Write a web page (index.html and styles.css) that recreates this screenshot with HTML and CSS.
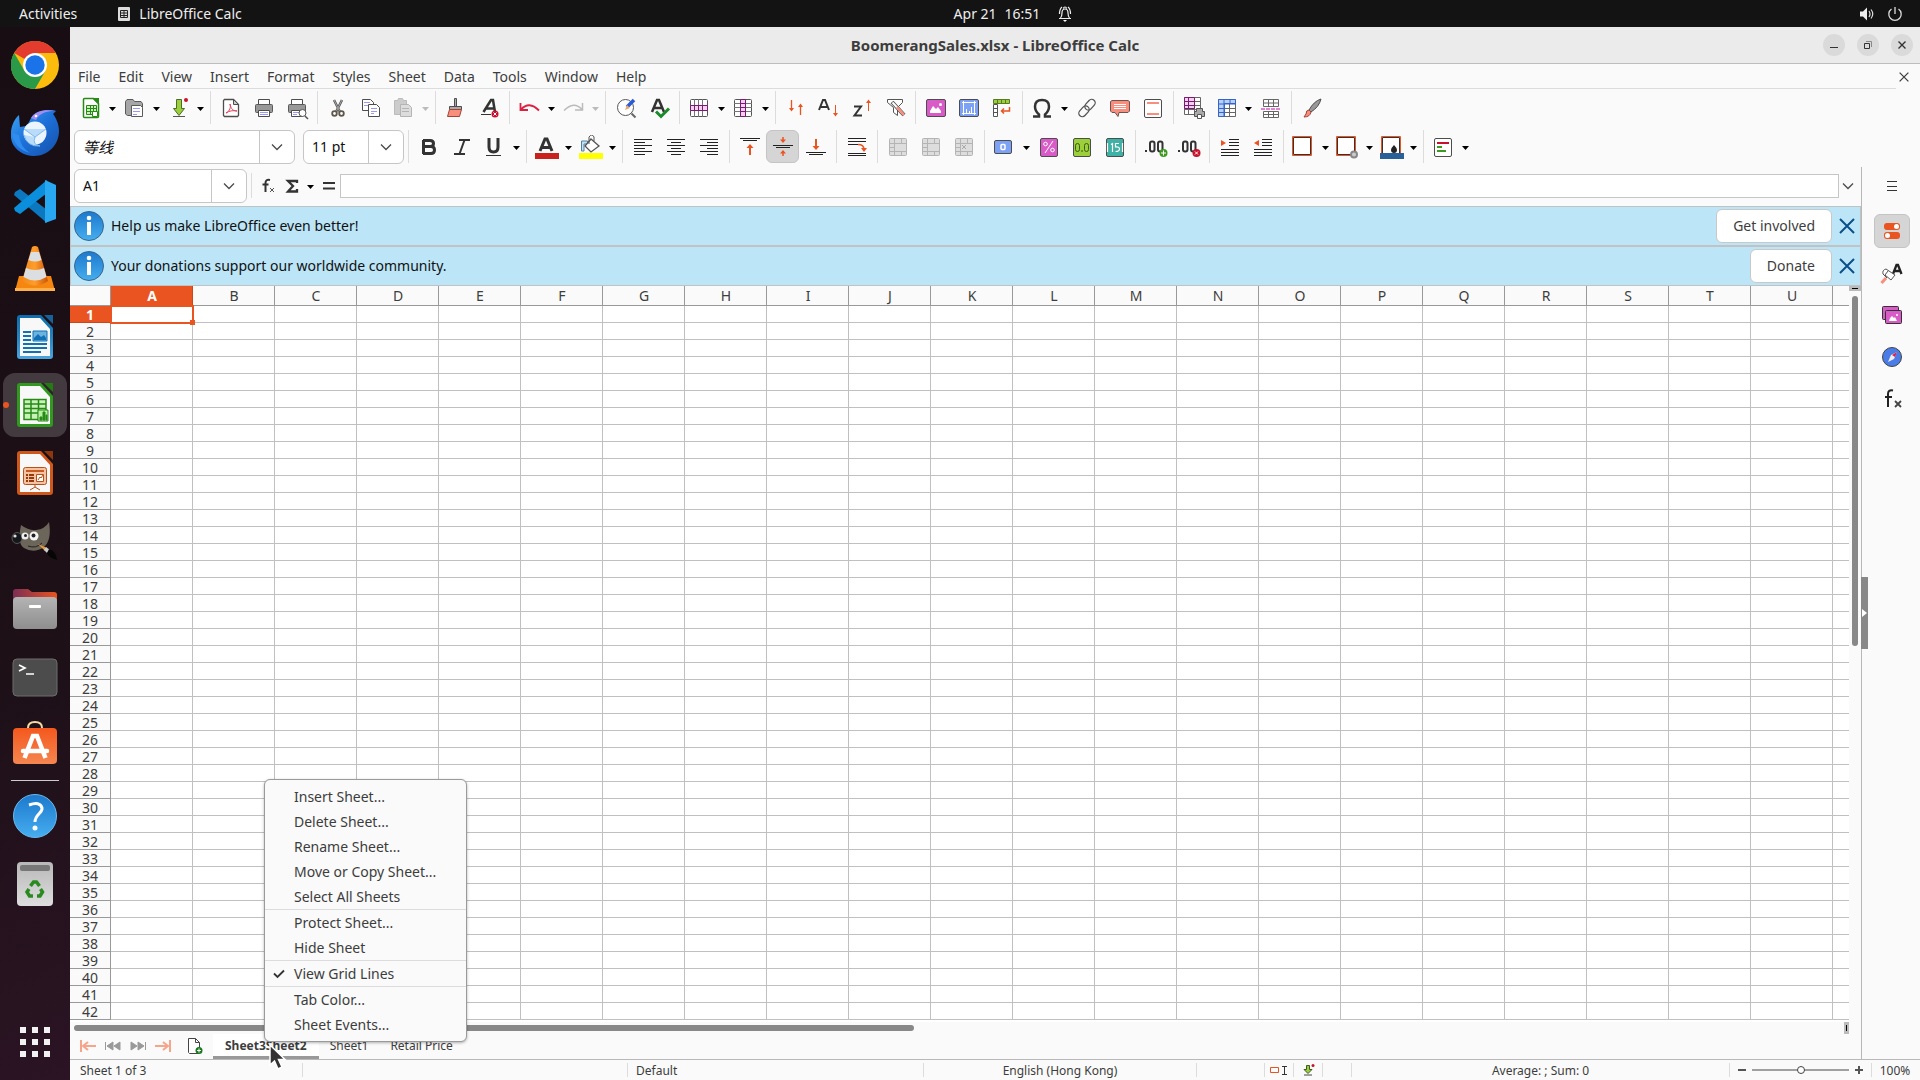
FILE: index.html
```
<!DOCTYPE html>
<html lang="en">
<head>
  <meta charset="UTF-8">
  <meta name="viewport" content="width=device-width, initial-scale=1">
  <title>BoomerangSales.xlsx - LibreOffice Calc</title>
  <link rel="stylesheet" href="styles.css">
</head>
<body>
  <svg class="defs" width="0" height="0" aria-hidden="true">
    <linearGradient id="blueDoc" x2="0" y2="1"><stop offset="0" stop-color="#0d6cab"/><stop offset=".5" stop-color="#2583c0"/><stop offset="1" stop-color="#4aa6de"/></linearGradient>
    <linearGradient id="bag" x2="0" y2="1"><stop offset="0" stop-color="#f4581d"/><stop offset="1" stop-color="#f58650"/></linearGradient>
    <linearGradient id="info" x2="0" y2="1"><stop offset="0" stop-color="#1c78cc"/><stop offset="1" stop-color="#46aef0"/></linearGradient>
    <linearGradient id="grey" x2="0" y2="1"><stop offset="0" stop-color="#b4b4b4"/><stop offset="1" stop-color="#8e8e8e"/></linearGradient>
    <linearGradient id="trash" x2="0" y2="1"><stop offset="0" stop-color="#b8b8b8"/><stop offset="1" stop-color="#dedede"/></linearGradient>
    <linearGradient id="folder"><stop offset="0" stop-color="#7c2d55"/><stop offset="1" stop-color="#e95420"/></linearGradient>
    <linearGradient id="bird" x2="1" y2="1"><stop offset="0" stop-color="#3aa5f5"/><stop offset=".5" stop-color="#1c6fd8"/><stop offset="1" stop-color="#1550a8"/></linearGradient>
    <linearGradient id="cone"><stop offset="0" stop-color="#f08a1c"/><stop offset=".5" stop-color="#ff9c2a"/><stop offset="1" stop-color="#c9550a"/></linearGradient>
    <symbol id="dd" viewBox="0 0 11 24"><path d="M2 11h7l-3.500 4z" fill="currentColor"/></symbol>
    <symbol id="chev" viewBox="0 0 12 12"><path d="M1 3.500l5 5 5-5" fill="none" stroke="#4a4a4a" stroke-width="1.300"/></symbol>
    <symbol id="cross" viewBox="0 0 16 16"><path d="M1 1l14 14M15 1L1 15" fill="none" stroke="currentColor" stroke-width="2"/></symbol>
    <symbol id="merge" viewBox="0 0 24 24"><rect x="3.500" y="3.500" width="17" height="17" rx="1" fill="#ddd" stroke="#b4b4b4"/><path d="M3 8.500h18M3 16.500h18M8.500 3v18M15.500 3v5M15.500 16v5M3 12.500h5" stroke="#b4b4b4" fill="none"/></symbol>
  </svg>

  <header class="topbar">
    <div class="topbar-left">
      <button type="button">Activities</button>
      <button type="button" class="app-name">
        <svg width="14" height="16" viewBox="0 0 14 16"><path d="M1 2q0-1 1-1h10q1 0 1 1v12q0 1-1 1H2q-1 0-1-1z" fill="#ddd"/><path d="M3.500 4.500h7v7h-7zM3 7h8M3 9.500h8M7 4v8" stroke="#222" fill="none"/></svg>
        LibreOffice Calc
      </button>
    </div>
    <button type="button" class="clock">
      <span>Apr 21</span> <span>16:51</span>
      <svg width="14" height="18" viewBox="0 0 14 18"><path d="M1 13.500h12M2.500 13q1.500-2 1.500-5 0-4 3-4t3 4q0 3 1.500 5M5.500 3.500Q5.500 2 7 2t1.500 1.500M1.500 9q0-5 2.500-7M12.500 9q0-5-2.500-7" fill="none" stroke="#eee" stroke-width="1.200"/><path d="M5 15h4l-2 2z" fill="#fff"/></svg>
    </button>
    <div class="topbar-right">
      <svg width="16" height="16" viewBox="0 0 16 16"><path d="M1 5.500h3L8 1.500v13L4 10.500H1z" fill="#eee"/><path d="M10 5q2 3 0 6M12 3.500q3.500 4.500 0 9" fill="none" stroke="#ddd" stroke-width="1.200"/></svg>
      <svg width="16" height="16" viewBox="0 0 16 16"><path d="M4.500 3A6.200 6.200 0 1 0 11.500 3M8 1v7" fill="none" stroke="#ddd" stroke-width="1.300"/></svg>
    </div>
  </header>

  <div class="desktop">
    <nav class="dock">
      <button type="button" aria-label="Chrome">
        <svg viewBox="0 0 48 48"><circle cx="24" cy="24" r="24" fill="#fbbc0e"/><path d="M24 24L3.200 12A24 24 0 0 1 44.800 12H24z" fill="#e33b2e"/><path d="M3.200 12A24 24 0 0 0 24 48l10.400-18L24 24 13.600 30z" fill="#2a9a48"/><circle cx="24" cy="24" r="12" fill="#fff"/><circle cx="24" cy="24" r="9.700" fill="#1a73e8"/></svg>
      </button>
      <button type="button" aria-label="Thunderbird">
        <svg viewBox="0 0 48 48"><path d="M8 6c-7 6-10 18-7 27 3 8 12 14 22 14 14 0 25-11 25-25 0-7-3-13-6-17l3-3c-9-2-20-1-25 7-2 4-3 6-5 8L9 18z" fill="url(#bird)"/><path d="M20 9C24 2 34 0 45 2c-8 0-16 1-20 9z" fill="#a58cf5"/><circle cx="24" cy="24" r="11.500" fill="#eaf5ff"/><path d="M13 20l11 8 11-8M24 28q-3 8 5 9-13 1-16-11" fill="#b9dcfb" stroke="#7fb8ee"/><path d="M1 24q2 16 18 20Q9 38 8 26z" fill="#2f8df0"/><circle cx="25" cy="7" r="1.300" fill="#fff"/></svg>
      </button>
      <button type="button" aria-label="Visual Studio Code">
        <svg viewBox="0 0 48 48"><path d="M4 15l5-3 27 21v13L3 18z" fill="#0b78c0"/><path d="M4 34l5 3 27-21V3L3 31z" fill="#0b8fdc"/><path d="M34 3l11 5v34l-11 4z" fill="#29a8f2"/></svg>
      </button>
      <button type="button" aria-label="VLC">
        <svg viewBox="0 0 48 48"><path d="M8 31h32l4 15H4z" fill="#f5860f"/><path d="M4 43h40v3H4z" fill="#ffb04a"/><path d="M21 2q3-2 6 0l10 34q-13 9-26 0z" fill="url(#cone)"/><path d="M20 7h8l2.500 8q-6.500 3-13 0zM15 23q9 4 18 0l2.500 9q-11.500 7-23 0z" fill="#dcdfe2"/></svg>
      </button>
      <button type="button" aria-label="LibreOffice Writer">
        <svg viewBox="0 0 48 48"><path d="M9 2h23l10 11v30q0 3-3 3H9q-3 0-3-3V5q0-3 3-3z" fill="url(#blueDoc)"/><path d="M9 5h20l10 11v27H9z" fill="#f8f8f8"/><path d="M30 2l12 13V11l-9-9z" fill="#1a1016"/><path d="M33 2h9v9z" fill="#17629a"/><path d="M12 19h8M12 23h8M12 27h8M12 31h24M12 35h24M12 39h18" stroke="#1171b5" stroke-width="2"/><path d="M22 18h14v10H22z" fill="#6bb4e0" stroke="#1171b5"/><path d="M23 27v-2l4-4 3 3 3-2 2 3v2z" fill="#1171b5"/></svg>
      </button>
      <button type="button" class="active" aria-label="LibreOffice Calc">
        <svg viewBox="0 0 48 48"><path d="M9 2h23l10 11v30q0 3-3 3H9q-3 0-3-3V5q0-3 3-3z" fill="#2f9a1d"/><path d="M9 5h20l10 11v27H9z" fill="#f8f8f8"/><path d="M30 2l12 13V11l-9-9z" fill="#2c2429"/><path d="M33 2h9v9z" fill="#237c12"/><path d="M13 18.500h22v20H13zM13 23h22M13 27.500h22M13 32h22M20 18v20M27.500 18v20" fill="#c9f2b8" stroke="#268a15" stroke-width="1.500"/><path d="M27 29h10v11H27z" fill="#b8eea4" stroke="#268a15"/><path d="M29 39v-3h2v3zM32 39v-8h2v8zM35 39v-5h1v5z" fill="#268a15" stroke="#268a15"/></svg>
      </button>
      <button type="button" aria-label="LibreOffice Impress">
        <svg viewBox="0 0 48 48"><path d="M9 2h23l10 11v30q0 3-3 3H9q-3 0-3-3V5q0-3 3-3z" fill="#cf5719"/><path d="M9 5h20l10 11v27H9z" fill="#f8f8f8"/><path d="M30 2l12 13V11l-9-9z" fill="#1a1016"/><path d="M33 2h9v9z" fill="#8e360c"/><rect x="12.500" y="18.500" width="23" height="17" rx="2" fill="#f3c3a4" stroke="#b8501a"/><path d="M15 22h18" stroke="#c9591f" stroke-width="2"/><path d="M15 26h2M18 26h5M15 29h2M18 29h5M15 32h2M18 32h5" stroke="#963a0b" stroke-width="2"/><path d="M25.500 25.500h7v7h-7zM27 31l2-3 1 1 2-3M24 36v2l-5 3M24 38l5 3" fill="#fff" stroke="#b8501a"/></svg>
      </button>
      <button type="button" aria-label="GIMP">
        <svg viewBox="0 0 48 48"><path d="M10 8q8 6 15 5 9-1 13-8 3 18-5 25-10 7-20 1Q6 27 10 8z" fill="#6b655a"/><ellipse cx="6" cy="21" rx="5" ry="5.500" fill="#15181a" stroke="#555"/><circle cx="4" cy="19" r="1.600" fill="#ddd"/><circle cx="14" cy="19" r="3.500" fill="#eee"/><circle cx="23" cy="19" r="4.500" fill="#f4f4f4"/><circle cx="14.500" cy="18.500" r="1.500" fill="#222"/><circle cx="22.500" cy="18.500" r="2" fill="#222"/><path d="M17 29q8 3 14-3" stroke="#222" fill="none"/><path d="M27 27l9 4-2 3z" fill="#e69a3c"/><path d="M35 30l4 3-3 3-3-3z" fill="#ccc"/><path d="M38 32q7 2 8 11-8-2-10-7z" fill="#060606"/></svg>
      </button>
      <button type="button" aria-label="Files">
        <svg viewBox="0 0 48 48"><path d="M2 7q0-3 3-3h12l4 3h22q3 0 3 3v15H2z" fill="url(#folder)"/><rect x="2" y="12" width="44" height="32" rx="4" fill="url(#grey)"/><rect x="18" y="20" width="12" height="3" rx="1" fill="#fff"/></svg>
      </button>
      <button type="button" aria-label="Terminal">
        <svg viewBox="0 0 48 48"><rect x="2" y="6" width="44" height="37" rx="4" fill="#4c4c4c" stroke="#6c6c6c"/><path d="M8 12l6 3-6 3M15 21h8" fill="none" stroke="#fff" stroke-width="1.700"/></svg>
      </button>
      <button type="button" aria-label="Ubuntu Software">
        <svg viewBox="0 0 48 48"><path d="M17 10V7q0-6 7-6t7 6v3" fill="none" stroke="#f5d9a5" stroke-width="2"/><rect x="2" y="7" width="44" height="36" rx="4" fill="url(#bag)"/><path d="M13.500 37l8.500-22h4l8.500 22" stroke="#fff" stroke-width="4.500" fill="none"/><path d="M12 30h24" stroke="#fff" stroke-width="4.500" stroke-linecap="round"/></svg>
      </button>
      <hr>
      <button type="button" aria-label="Help">
        <svg viewBox="0 0 48 48"><circle cx="24" cy="24" r="21.500" fill="url(#info)" stroke="#6cb9ee"/><path d="M18 13q11-4 13 3c1 5-7 6-7 14" fill="none" stroke="#fff" stroke-width="3"/><circle cx="24" cy="36" r="2.500" fill="#fff"/></svg>
      </button>
      <button type="button" aria-label="Trash">
        <svg viewBox="0 0 48 48"><rect x="6" y="2" width="36" height="44" rx="4" fill="url(#trash)"/><rect x="9" y="5" width="30" height="6" rx="2" fill="#777"/><path d="M19.500 26l3-4h3l3 4M29.500 29l2 3-2.500 4H26M22 36h-3.500L16 32l2-3" fill="none" stroke="#2a8a20" stroke-width="3.500"/></svg>
      </button>
      <button type="button" class="apps" aria-label="Show Applications">
        <svg viewBox="0 0 48 48"><path d="M9 9h6v6H9zM21 9h6v6h-6zM33 9h6v6h-6zM9 21h6v6H9zM21 21h6v6h-6zM33 21h6v6h-6zM9 33h6v6H9zM21 33h6v6h-6zM33 33h6v6h-6z" fill="#f2f2f2"/></svg>
      </button>
    </nav>

    <main class="window">
      <div class="titlebar">
        <h1>BoomerangSales.xlsx - LibreOffice Calc</h1>
        <div class="win-buttons">
          <button type="button" aria-label="Minimize"><svg width="10" height="10" viewBox="0 0 10 10"><path d="M1 7.500h8" stroke="#333"/></svg></button>
          <button type="button" aria-label="Restore"><svg width="10" height="10" viewBox="0 0 10 10"><path d="M1.500 3.500h5v5h-5z" fill="none" stroke="#333"/><path d="M3 1.500h5.500V7" fill="none" stroke="#888"/></svg></button>
          <button type="button" aria-label="Close"><svg width="10" height="10" viewBox="0 0 10 10"><path d="M1.500 1.500l7 7M8.500 1.500l-7 7" stroke="#333" stroke-width="1.400"/></svg></button>
        </div>
      </div>

      <div class="menubar">
        <nav>
          <button type="button">File</button><button type="button">Edit</button><button type="button">View</button><button type="button">Insert</button><button type="button">Format</button><button type="button">Styles</button><button type="button">Sheet</button><button type="button">Data</button><button type="button">Tools</button><button type="button">Window</button><button type="button">Help</button>
        </nav>
        <button type="button" class="close-doc" aria-label="Close document"><svg width="10" height="10"><use href="#cross"/></svg></button>
      </div>

      <div class="toolbar">
        <button type="button" class="tb" aria-label="New"><svg viewBox="0 0 24 24"><path d="M5.500 2.500h9l5 5v13q0 1-1 1h-13q-1 0-1-1v-17q0-1 1-1z" fill="#fff" stroke="#268a15" stroke-width="1.500"/><path d="M13 2h7v7z" fill="#268a15"/><path d="M7.500 9.500h10v9h-10zM7 12.500h11M7 15.500h11M11.500 9v10M14.500 9v10" fill="#c9f2b8" stroke="#268a15"/><path d="M13.500 15.500h5v5h-5z" fill="#fff" stroke="#268a15"/></svg></button>
        <button type="button" class="dd" aria-label="New options"><svg><use href="#dd"/></svg></button>
        <button type="button" class="tb" aria-label="Open"><svg viewBox="0 0 24 24"><path d="M2.500 18V5.500l1.500-2h6l1.500 2H18l1.500 2v12h-15z" fill="#a6a6a6" stroke="#5a5a5a"/><path d="M8.500 9.500h9l2 2v9h-11z" fill="#fff" stroke="#5a5a5a"/><path d="M10 12.500h7M10 15.500h7M10 18.500h4" stroke="#9a9af0"/></svg></button>
        <button type="button" class="dd" aria-label="Open options"><svg><use href="#dd"/></svg></button>
        <button type="button" class="tb" aria-label="Save"><svg viewBox="0 0 24 24"><path d="M9.500 3.500h5v9h3l-5.500 7-5.500-7h3z" fill="#9bcf3c" stroke="#4d6b2a"/><path d="M6 20.500h12" stroke="#555"/><circle cx="19" cy="4" r="2" fill="#c9112d"/></svg></button>
        <button type="button" class="dd" aria-label="Save options"><svg><use href="#dd"/></svg></button>
        <i class="sep"></i>
        <button type="button" class="tb" aria-label="Export as PDF"><svg viewBox="0 0 24 24"><path d="M5.500 3.500h9l5 5v11l-1 1h-13l-1-1v-15z" fill="#fff" stroke="#4d4d4d" stroke-width="1.300"/><path d="M14.500 3.500v5h5z" fill="#ccc" stroke="#4d4d4d"/><path d="M7 17c4-2 5-6 4-9 1 5 3 7 7 7-4-1-8 0-11 2z" fill="none" stroke="#e0405a"/></svg></button>
        <button type="button" class="tb" aria-label="Print"><svg viewBox="0 0 24 24"><path d="M6.500 9V3.500h11V9" fill="#fff" stroke="#4d4d4d"/><rect x="3.500" y="8.500" width="17" height="8" rx="1" fill="#999" stroke="#5a5a5a"/><path d="M6.500 14.500h11v6h-11z" fill="#fff" stroke="#4d4d4d"/><path d="M8 16.500h8M8 18.500h8" stroke="#9a9af0"/></svg></button>
        <button type="button" class="tb" aria-label="Print preview"><svg viewBox="0 0 24 24"><path d="M6.500 9V3.500h11V9" fill="#fff" stroke="#4d4d4d"/><rect x="3.500" y="8.500" width="17" height="8" rx="1" fill="#999" stroke="#5a5a5a"/><path d="M6.500 14.500h11v6h-11z" fill="#fff" stroke="#4d4d4d"/><path d="M8 16.500h8M8 18.500h4" stroke="#9a9af0"/><circle cx="17.500" cy="17" r="3.500" fill="#fff" stroke="#555"/><path d="M20 20l3 3" stroke="#555" stroke-width="1.500"/></svg></button>
        <i class="sep"></i>
        <button type="button" class="tb" aria-label="Cut"><svg viewBox="0 0 24 24"><path d="M8 4l6 12M16 4l-6 12" stroke="#555" stroke-width="2.500"/><path d="M8 4l6 12M16 4l-6 12" stroke="#aaa"/><circle cx="8.500" cy="17.500" r="2.300" fill="none" stroke="#5e584b" stroke-width="1.800"/><circle cx="15.500" cy="17.500" r="2.300" fill="none" stroke="#5e584b" stroke-width="1.800"/></svg></button>
        <button type="button" class="tb" aria-label="Copy"><svg viewBox="0 0 24 24"><path d="M3.500 3.500h8l3 3v8h-11z" fill="#fff" stroke="#4d4d4d"/><path d="M5 6.500h6M5 9.500h6" stroke="#9a9af0"/><path d="M9.500 8.500h8l3 3v9h-11z" fill="#fff" stroke="#4d4d4d"/><path d="M12 12.500h6M12 15.500h6M12 17.500h3" stroke="#9a9af0"/></svg></button>
        <button type="button" class="tb" aria-label="Paste"><svg viewBox="0 0 24 24"><path d="M2.500 4.500h3l1-2h4l1 2h3v14h-12z" fill="#ccc" stroke="#bbb"/><path d="M8.500 8.500h8l3 3v9h-11z" fill="#ddd" stroke="#b4b4b4"/><path d="M10 12.500h7M10 15.500h7" stroke="#b4b4b4"/></svg></button>
        <button type="button" class="dd off" aria-label="Paste options"><svg><use href="#dd"/></svg></button>
        <i class="sep"></i>
        <button type="button" class="tb" aria-label="Clone formatting"><svg viewBox="0 0 24 24"><path d="M10.500 2.500h2v8h-2z" fill="#aaa" stroke="#4d4d4d"/><path d="M5.500 10.500h12v3h-12z" fill="#aaa" stroke="#4d4d4d"/><path d="M5.500 13.500h12l-2 7h-12z" fill="#f98e7d" stroke="#a04538"/></svg></button>
        <button type="button" class="tb" aria-label="Clear formatting"><svg viewBox="0 0 24 24"><path d="M6.500 16L14 4h2l2 12M9 12.500h8" fill="none" stroke="#333" stroke-width="2.500"/><path d="M4 18.500h10" stroke="#333"/><circle cx="18" cy="18" r="3.500" fill="#c9112d"/><path d="M16.500 16.500l3 3M19.500 16.500l-3 3" stroke="#fff"/></svg></button>
        <i class="sep"></i>
        <button type="button" class="tb" aria-label="Undo"><svg viewBox="0 0 24 24"><path d="M2.500 7v7H10M3 13.500q8-9 18 1" fill="none" stroke="#dd2040" stroke-width="1.800"/></svg></button>
        <button type="button" class="dd" aria-label="Undo options"><svg><use href="#dd"/></svg></button>
        <button type="button" class="tb" aria-label="Redo"><svg viewBox="0 0 24 24"><path d="M20.500 7v7H13M20 13.500q-8-9-18 1" fill="none" stroke="#bbb" stroke-width="1.500"/></svg></button>
        <button type="button" class="dd off" aria-label="Redo options"><svg><use href="#dd"/></svg></button>
        <i class="sep"></i>
        <button type="button" class="tb" aria-label="Find and replace"><svg viewBox="0 0 24 24"><circle cx="11.500" cy="11.500" r="8" fill="#fff" stroke="#555"/><path d="M17.500 17.500l4 4" stroke="#666" stroke-width="2"/><path d="M20 4l-7 7" stroke="#2a5bd8" stroke-width="3.500"/><path d="M13 9l3 3-5 2z" fill="#f0a868"/></svg></button>
        <button type="button" class="tb" aria-label="Spelling"><svg viewBox="0 0 24 24"><path d="M5 16L10 4h2l5 12M7.500 12h7" fill="none" stroke="#333" stroke-width="2.500"/><path d="M9 15.500l5 5 8-8" fill="none" stroke="#1a8a2a" stroke-width="3"/></svg></button>
        <i class="sep"></i>
        <button type="button" class="tb" aria-label="Row"><svg viewBox="0 0 24 24"><rect x="2.500" y="3.500" width="17" height="17" rx="1" fill="#fff" stroke="#555"/><path d="M6.500 3v18M10.500 3v18M14.500 3v18" stroke="#777"/><path d="M2.500 9.500h17v5h-17zM6.500 9v6M10.500 9v6M14.500 9v6" fill="#f3d0f0" stroke="#7a1a72"/></svg></button>
        <button type="button" class="dd" aria-label="Row options"><svg><use href="#dd"/></svg></button>
        <button type="button" class="tb" aria-label="Column"><svg viewBox="0 0 24 24"><rect x="2.500" y="3.500" width="17" height="17" rx="1" fill="#fff" stroke="#555"/><path d="M2 7.500h18M2 11.500h18M2 15.500h18" stroke="#777"/><path d="M8.500 3.500h5v17h-5zM8 7.500h6M8 11.500h6M8 15.500h6" fill="#f3d0f0" stroke="#7a1a72"/></svg></button>
        <button type="button" class="dd" aria-label="Column options"><svg><use href="#dd"/></svg></button>
        <i class="sep"></i>
        <button type="button" class="tb" aria-label="Sort"><svg viewBox="0 0 24 24"><path d="M7.500 4v10M16.500 9v10" stroke="#e95420" stroke-width="1.300"/><path d="M5 12h5l-2.500 3.500zM14 11h5l-2.500-3.500z" fill="#e95420"/></svg></button>
        <button type="button" class="tb" aria-label="Sort ascending"><svg viewBox="0 0 24 24"><path d="M2 14L6 4h2l4 10M4 11h6" fill="none" stroke="#333" stroke-width="2"/><path d="M18.500 9v10" stroke="#e95420"/><path d="M16 17h5l-2.500 3.500z" fill="#e95420"/></svg></button>
        <button type="button" class="tb" aria-label="Sort descending"><svg viewBox="0 0 24 24"><path d="M4 10.500h7L4.500 19.500H12" fill="none" stroke="#333" stroke-width="2"/><path d="M18.500 5v10" stroke="#e95420"/><path d="M16 7h5l-2.500-3.500z" fill="#e95420"/></svg></button>
        <button type="button" class="tb" aria-label="AutoFilter"><svg viewBox="0 0 24 24"><path d="M4.500 3.500h15v3l-5 5v8l-4-3v-5l-6-5z" fill="#fff" stroke="#555"/><path d="M9 6l12 13" stroke="#555" stroke-width="4"/><path d="M9.500 6.500l11 12" stroke="#fff" stroke-width="2"/><path d="M14 11l7 8" stroke="#f98e7d" stroke-width="2.500"/></svg></button>
        <i class="sep"></i>
        <button type="button" class="tb" aria-label="Image"><svg viewBox="0 0 24 24"><rect x="2.500" y="3.500" width="19" height="17" rx="1.500" fill="#d95bc8" stroke="#4d4d4d"/><path d="M6 17v-2l3-5 3 3 2-2 3 4v2z" fill="#fff"/><circle cx="16.500" cy="8.500" r="1.500" fill="#fff"/></svg></button>
        <button type="button" class="tb" aria-label="Chart"><svg viewBox="0 0 24 24"><rect x="2.500" y="3.500" width="19" height="17" rx="1.500" fill="#7da2f5" stroke="#4d4d4d"/><path d="M5 6.500h14M6.500 5v14M17.500 5v14M5 17.500h14M9.500 17v-4M12.500 17v-2M14.500 17v-6" stroke="#fff" fill="none"/></svg></button>
        <button type="button" class="tb" aria-label="Pivot table"><svg viewBox="0 0 24 24"><path d="M3.500 3.500h16v4h-16z" fill="#9bcf3c" stroke="#5a7a22"/><path d="M7.500 3v5M11.500 3v5M15.500 3v5" stroke="#5a7a22"/><path d="M3.500 8.500h4v12h-4zM3 12.500h5M3 16.500h5" fill="#fff" stroke="#555"/><path d="M19.500 11v4H12M14 12.500L11.500 15l2.500 2.500" fill="none" stroke="#e95420" stroke-width="1.500"/></svg></button>
        <i class="sep"></i>
        <button type="button" class="tb" aria-label="Special character"><svg viewBox="0 0 24 24"><path d="M2 20.500h6v-2Q4 15 4 10.500q0-6.500 7-6.500t7 6.500q0 4.500-4 8v2h6" fill="none" stroke="#333" stroke-width="2.500"/></svg></button>
        <button type="button" class="dd" aria-label="Symbols"><svg><use href="#dd"/></svg></button>
        <button type="button" class="tb" aria-label="Hyperlink"><svg viewBox="0 0 24 24"><g fill="none" stroke="#555" stroke-width="1.300" transform="rotate(-48 12 12)"><rect x="1.500" y="8.500" width="12" height="7" rx="3.500"/><rect x="10.500" y="8.500" width="12" height="7" rx="3.500"/></g></svg></button>
        <button type="button" class="tb" aria-label="Comment"><svg viewBox="0 0 24 24"><path d="M4 4.500h16l1.500 1V15L20 16.500h-9l-1 4-3-4H4L2.500 15V5.500z" fill="#f98e7d" stroke="#6b5552"/><path d="M6 8.500h12M6 10.500h12M6 12.500h12" stroke="#fff"/></svg></button>
        <button type="button" class="tb" aria-label="Headers and footers"><svg viewBox="0 0 24 24"><rect x="3.500" y="3.500" width="17" height="18" rx="1.500" fill="#fff" stroke="#4d4d4d"/><path d="M6 7h12M6 18h12" stroke="#f98e7d" stroke-width="2"/></svg></button>
        <i class="sep"></i>
        <button type="button" class="tb" aria-label="Print area"><svg viewBox="0 0 24 24"><path d="M2.500 1.500h16v17h-16zM2 5.500h16M2 9.500h16M2 13.500h16M6.500 1v18M12.500 1v18" fill="#fff" stroke="#666"/><path d="M2.500 1.500h10v11h-10zM2 5.500h10M2 9.500h10M6.500 1v11" fill="#f3d0f0" stroke="#7a1a72"/><path d="M14.500 12.500h6v3h2v5h-10v-5h2z" fill="#aaa" stroke="#555"/><path d="M15.500 18.500h4v4h-4z" fill="#fff" stroke="#555"/></svg></button>
        <button type="button" class="tb" aria-label="Freeze rows and columns"><svg viewBox="0 0 24 24"><path d="M3.500 3.500h17v17h-17zM3 12.500h18M3 16.500h18M14.500 3v18" fill="#fff" stroke="#666"/><path d="M3.500 20.500v-17h17v4h-11v13z" fill="#b8cffa" stroke="#3465c9"/><path d="M3 8h18M3 12.500h6M3 16.500h6M9 3v18M15 3v5" stroke="#3465c9"/></svg></button>
        <button type="button" class="dd" aria-label="Freeze options"><svg><use href="#dd"/></svg></button>
        <button type="button" class="tb" aria-label="Split window"><svg viewBox="0 0 24 24"><path d="M4.500 3.500h15v7h-15zM4 7h16M9.500 3v7M14.500 3v7M4.500 15.500h15v6h-15zM4 18.500h16M9.500 15v7M14.500 15v7" fill="#fff" stroke="#666"/><path d="M2 13h20" stroke="#d95bc8" stroke-width="1.500" stroke-dasharray="4 1"/></svg></button>
        <i class="sep"></i>
        <button type="button" class="tb" aria-label="Draw functions"><svg viewBox="0 0 24 24"><path d="M21 3q-7 2-12 11l2 2q8-5 10-13z" fill="#999" stroke="#4d4d4d"/><path d="M9 14q-3 0-3 4l-2 3q6 0 7-5z" fill="#f98e7d" stroke="#a04538"/></svg></button>
      </div>

      <div class="toolbar">
        <div class="combo font-name"><input type="text" value="等线" aria-label="Font name"><button type="button" aria-label="Font list"><svg width="12" height="12"><use href="#chev"/></svg></button></div>
        <div class="combo font-size"><input type="text" value="11 pt" aria-label="Font size"><button type="button" aria-label="Size list"><svg width="12" height="12"><use href="#chev"/></svg></button></div>
        <i class="sep"></i>
        <button type="button" class="tb" aria-label="Bold"><svg viewBox="0 0 24 24"><path d="M6 5.500h7q3.500 0 3.500 3t-3.500 3H6M6 11.500h8q3.500 0 3.500 3.500T14 18.500H6M6.500 5v14" fill="none" stroke="#333" stroke-width="3"/></svg></button>
        <button type="button" class="tb" aria-label="Italic"><svg viewBox="0 0 24 24"><path d="M9 5h11M4 19h11M14.500 5l-5 14" stroke="#333" stroke-width="2"/></svg></button>
        <button type="button" class="tb" aria-label="Underline"><svg viewBox="0 0 24 24"><path d="M6 3v9q0 5 4.500 5t4.500-5V3" fill="none" stroke="#333" stroke-width="3"/><path d="M3 20.500h15" stroke="#333"/></svg></button>
        <button type="button" class="dd" aria-label="Underline options"><svg><use href="#dd"/></svg></button>
        <i class="sep"></i>
        <button type="button" class="tb" aria-label="Font color"><svg viewBox="0 0 24 24"><path d="M5 16L10 4h2l5 12M7.500 12.500h7" fill="none" stroke="#333" stroke-width="3"/><path d="M0 18h24v6H0z" fill="#c9211e"/></svg></button>
        <button type="button" class="dd" aria-label="Font color options"><svg><use href="#dd"/></svg></button>
        <button type="button" class="tb" aria-label="Background color"><svg viewBox="0 0 24 24"><path d="M2.500 16V6h6v3H5v7z" fill="#bfe3f5" stroke="#5580a0"/><path d="M12 4l8 7-8 6-6-6z" fill="#fff" stroke="#555" stroke-width="1.300"/><path d="M10 9V2q3-4 5 0v4" fill="none" stroke="#555"/><path d="M0 18h24v6H0z" fill="#ff0"/></svg></button>
        <button type="button" class="dd" aria-label="Background color options"><svg><use href="#dd"/></svg></button>
        <i class="sep"></i>
        <button type="button" class="tb" aria-label="Align left"><svg viewBox="0 0 24 24"><path d="M3 4.500h18M3 7.500h11M3 10.500h18M3 13.500h11M3 16.500h18M3 19.500h11" stroke="#222"/></svg></button>
        <button type="button" class="tb" aria-label="Center"><svg viewBox="0 0 24 24"><path d="M3 4.500h18M7 7.500h10M3 10.500h18M7 13.500h10M3 16.500h18M7 19.500h10" stroke="#222"/></svg></button>
        <button type="button" class="tb" aria-label="Align right"><svg viewBox="0 0 24 24"><path d="M3 4.500h18M10 7.500h11M3 10.500h18M10 13.500h11M3 16.500h18M10 19.500h11" stroke="#222"/></svg></button>
        <i class="sep"></i>
        <button type="button" class="tb" aria-label="Align top"><svg viewBox="0 0 24 24"><path d="M2 3.500h20M5 5.500h14" stroke="#222"/><path d="M12 10v10" stroke="#e95420" stroke-width="2"/><path d="M8.500 13h7L12 9z" fill="#e95420"/></svg></button>
        <button type="button" class="tb on" aria-label="Center vertically"><svg viewBox="0 0 24 24"><path d="M2 10.500h20M5 12.500h14" stroke="#222"/><path d="M12 2v5M12 16v5" stroke="#e95420" stroke-width="1.500"/><path d="M9 4.500h6L12 8zM9 18.500h6L12 15z" fill="#e95420"/></svg></button>
        <button type="button" class="tb" aria-label="Align bottom"><svg viewBox="0 0 24 24"><path d="M2 17.500h20M5 19.500h14" stroke="#222"/><path d="M12 4v9" stroke="#e95420" stroke-width="2"/><path d="M8.500 11h7L12 15z" fill="#e95420"/></svg></button>
        <i class="sep"></i>
        <button type="button" class="tb" aria-label="Wrap text"><svg viewBox="0 0 24 24"><path d="M3 3.500h18M3 6.500h18M3 9.500h10M3 18.500h18M3 20.500h18" stroke="#222"/><path d="M13 9.500q6 0 6 5" stroke="#e95420" stroke-width="1.500" fill="none"/><path d="M16 13h6l-3 4z" fill="#e95420"/></svg></button>
        <i class="sep"></i>
        <button type="button" class="tb" aria-label="Merge and center"><svg><use href="#merge"/></svg></button>
        <button type="button" class="tb" aria-label="Merge cells"><svg><use href="#merge"/></svg></button>
        <button type="button" class="tb" aria-label="Unmerge cells"><svg viewBox="0 0 24 24"><use href="#merge"/><path d="M10 10l4 4M14 10l-4 4" stroke="#aaa"/></svg></button>
        <i class="sep"></i>
        <button type="button" class="tb" aria-label="Currency"><svg viewBox="0 0 24 24"><rect x="1.500" y="5.500" width="17" height="13" rx="1.500" fill="#7da2f5" stroke="#4d4d4d"/><rect x="8" y="9.500" width="4" height="5" rx="1" fill="none" stroke="#fff" stroke-width="1.500"/></svg></button>
        <button type="button" class="dd" aria-label="Currency options"><svg><use href="#dd"/></svg></button>
        <button type="button" class="tb" aria-label="Percent"><svg viewBox="0 0 24 24"><rect x="3.500" y="3.500" width="17" height="18" rx="1.500" fill="#d95bc8" stroke="#4d4d4d"/><path d="M8 18l8-12" stroke="#fff"/><circle cx="8.500" cy="9" r="1.800" fill="none" stroke="#fff"/><circle cx="15.500" cy="15" r="1.800" fill="none" stroke="#fff"/></svg></button>
        <button type="button" class="tb" aria-label="Number"><svg viewBox="0 0 24 24"><rect x="3.500" y="3.500" width="17" height="18" rx="1.500" fill="#9bcf3c" stroke="#4d4d4d"/><rect x="5.500" y="8.500" width="4" height="8" rx="2" fill="none" stroke="#3c5c14"/><rect x="14.500" y="8.500" width="4" height="8" rx="2" fill="none" stroke="#3c5c14"/><path d="M12 15v2" stroke="#3c5c14"/></svg></button>
        <button type="button" class="tb" aria-label="Date"><svg viewBox="0 0 24 24"><rect x="3.500" y="3.500" width="17" height="18" rx="1.500" fill="#3fb0a5" stroke="#4d4d4d"/><path d="M4.500 8v9M9.500 17V8.500L8 9.500M16 8.500h-3.500v3.500q4-.5 4 2t-4 2.500M19.500 8v9" fill="none" stroke="#fff" stroke-width="1.200"/></svg></button>
        <i class="sep"></i>
        <button type="button" class="tb" aria-label="Add decimal place"><svg viewBox="0 0 24 24"><path d="M1 16h2" stroke="#333" stroke-width="2"/><rect x="6" y="6.500" width="4.500" height="10" rx="2" fill="none" stroke="#333" stroke-width="2"/><rect x="14" y="6.500" width="4.500" height="10" rx="2" fill="none" stroke="#333" stroke-width="2"/><circle cx="19.500" cy="18" r="4" fill="#3c9a1e"/><path d="M17 18h5M19.500 15.500v5" stroke="#fff"/></svg></button>
        <button type="button" class="tb" aria-label="Delete decimal place"><svg viewBox="0 0 24 24"><path d="M1 16h2" stroke="#333" stroke-width="2"/><rect x="6" y="6.500" width="4.500" height="10" rx="2" fill="none" stroke="#333" stroke-width="2"/><rect x="14" y="6.500" width="4.500" height="10" rx="2" fill="none" stroke="#333" stroke-width="2"/><circle cx="19.500" cy="18" r="4" fill="#c9112d"/><path d="M18 16.500l3 3M21 16.500l-3 3" stroke="#fff"/></svg></button>
        <i class="sep"></i>
        <button type="button" class="tb" aria-label="Increase indent"><svg viewBox="0 0 24 24"><path d="M11 4.500h10M11 7.500h10M11 10.500h10M3 14.500h18M3 17.500h18M3 20.500h18" stroke="#222"/><path d="M3 5l5 3-5 3z" fill="#e95420"/></svg></button>
        <button type="button" class="tb" aria-label="Decrease indent"><svg viewBox="0 0 24 24"><path d="M11 4.500h10M11 7.500h10M11 10.500h10M3 14.500h18M3 17.500h18M3 20.500h18" stroke="#222"/><path d="M8 5l-5 3 5 3z" fill="#e95420"/></svg></button>
        <i class="sep"></i>
        <button type="button" class="tb" aria-label="Borders"><svg viewBox="0 0 24 24"><path d="M.5 1.500h19v19H.5z" fill="#fff" stroke="#e95420"/><path d="M1.500 2.500h17v17h-17z" fill="none" stroke="#333"/></svg></button>
        <button type="button" class="dd" aria-label="Borders options"><svg><use href="#dd"/></svg></button>
        <button type="button" class="tb" aria-label="Border style"><svg viewBox="0 0 24 24"><path d="M.5 1.500h19v19H.5z" fill="#fff" stroke="#e95420"/><path d="M1.500 2.500h17v17h-17z" fill="none" stroke="#333"/><circle cx="18" cy="19.500" r="3" fill="#ccc" stroke="#888" stroke-width="2"/></svg></button>
        <button type="button" class="dd" aria-label="Border style options"><svg><use href="#dd"/></svg></button>
        <button type="button" class="tb" aria-label="Border color"><svg viewBox="0 0 24 24"><path d="M1.500 1.500h19v19h-19z" fill="#fff" stroke="#e95420"/><path d="M2.500 2.500h17v17h-17z" fill="none" stroke="#333"/><path d="M14 10q3 3 3 5 0 3-3 3t-3-3q0-2 3-5z" fill="#222"/><path d="M0 18h24v6H0z" fill="#2a6099"/></svg></button>
        <button type="button" class="dd" aria-label="Border color options"><svg><use href="#dd"/></svg></button>
        <i class="sep"></i>
        <button type="button" class="tb" aria-label="Conditional formatting"><svg viewBox="0 0 24 24"><rect x="2.500" y="3.500" width="17" height="18" rx="1.500" fill="#fff" stroke="#4d4d4d"/><path d="M5 8h12" stroke="#c9112d" stroke-width="2"/><path d="M5 12h5M5 16h9" stroke="#3c9a1e" stroke-width="2"/></svg></button>
        <button type="button" class="dd" aria-label="Conditional options"><svg><use href="#dd"/></svg></button>
      </div>

      <div class="work">
        <section class="doc">
          <div class="formula-bar">
            <div class="combo name-box"><input type="text" value="A1" aria-label="Name box"><button type="button" aria-label="Names"><svg width="12" height="12"><use href="#chev"/></svg></button></div>
            <i class="sep short"></i>
            <button type="button" class="fb" aria-label="Function wizard"><svg viewBox="0 0 24 24"><path d="M13 6q-4.500-1-4.500 3v9M5.500 10.500h6" fill="none" stroke="#333" stroke-width="2"/><path d="M13 14l4 4M17 14l-4 4" stroke="#555"/></svg></button>
            <button type="button" class="fb" aria-label="Sum"><svg viewBox="0 0 24 24"><path d="M16 9V7H7l5 5-5 5.500h9v-2.500" fill="none" stroke="#333" stroke-width="2.300"/></svg></button>
            <button type="button" class="dd" aria-label="Sum options"><svg><use href="#dd"/></svg></button>
            <button type="button" class="fb" aria-label="Formula"><svg viewBox="0 0 24 24"><path d="M7 9h12M7 14.500h12" stroke="#333" stroke-width="2"/></svg></button>
            <input type="text" class="formula" aria-label="Formula input">
            <button type="button" class="expand" aria-label="Expand formula bar"><svg width="12" height="12"><use href="#chev"/></svg></button>
          </div>

          <div class="infobar">
            <svg class="info" viewBox="0 0 30 30"><circle cx="15" cy="15" r="14.500" fill="url(#info)" stroke="#3a668a"/><path d="M15 11v13" stroke="#fff" stroke-width="4"/><circle cx="15" cy="7" r="2.300" fill="#fff"/></svg>
            <p>Help us make LibreOffice even better!</p>
            <button type="button" class="action">Get involved</button>
            <button type="button" class="dismiss" aria-label="Close infobar"><svg width="16" height="16"><use href="#cross"/></svg></button>
          </div>
          <div class="infobar">
            <svg class="info" viewBox="0 0 30 30"><circle cx="15" cy="15" r="14.500" fill="url(#info)" stroke="#3a668a"/><path d="M15 11v13" stroke="#fff" stroke-width="4"/><circle cx="15" cy="7" r="2.300" fill="#fff"/></svg>
            <p>Your donations support our worldwide community.</p>
            <button type="button" class="action">Donate</button>
            <button type="button" class="dismiss" aria-label="Close infobar"><svg width="16" height="16"><use href="#cross"/></svg></button>
          </div>

          <div class="sheet">
            <div class="grid-wrap">
              <table class="grid" id="grid"></table>
            </div>
            <div class="vscroll"><i class="split"></i><i class="thumb"></i></div>
          </div>
          <div class="hscroll"><i class="thumb"></i><i class="split"></i></div>

          <div class="tabs">
            <div class="tab-nav">
              <button type="button" aria-label="First sheet"><svg viewBox="0 0 18 14"><path d="M2 1v12M4 7h13M9 3L4 7l5 4" fill="none" stroke="#f4a58a" stroke-width="2"/></svg></button>
              <button type="button" aria-label="Previous sheet"><svg viewBox="0 0 18 14"><path d="M1.500 3v8M9 3v8L3 7zM16 3v8l-6-4z" fill="#999" stroke="#999"/></svg></button>
              <button type="button" aria-label="Next sheet"><svg viewBox="0 0 18 14"><path d="M16.500 3v8M9 3v8l6-4zM2 3v8l6-4z" fill="#999" stroke="#999"/></svg></button>
              <button type="button" aria-label="Last sheet"><svg viewBox="0 0 18 14"><path d="M16 1v12M14 7H1M9 3l5 4-5 4" fill="none" stroke="#f4a58a" stroke-width="2"/></svg></button>
            </div>
            <button type="button" class="add-sheet" aria-label="Add sheet"><svg viewBox="0 0 18 18"><path d="M3.500 1.500h7l4 4v10l-1 1h-9l-1-1z" fill="#fff" stroke="#444"/><path d="M10.500 1.500v4h4" fill="none" stroke="#444"/><circle cx="14" cy="13.500" r="3.500" fill="#1a7a20"/><path d="M12 13.500h4M14 11.500v4" stroke="#fff"/></svg></button>
            <button type="button" class="tab current">Sheet3Sheet2</button>
            <button type="button" class="tab">Sheet1</button>
            <button type="button" class="tab">Retail Price</button>
          </div>
        </section>

        <aside class="sidebar">
          <button type="button" class="collapse" aria-label="Collapse sidebar"><svg width="5" height="8" viewBox="0 0 5 8"><path d="M0 0l5 4-5 4z" fill="#fff"/></svg></button>
          <button type="button" class="deck settings" aria-label="Sidebar settings"><svg viewBox="0 0 24 24"><path d="M7 7.500h10M7 12.500h10M7 16.500h10" stroke="#333"/></svg></button>
          <button type="button" class="deck on" aria-label="Properties"><svg viewBox="0 0 24 24"><rect x="4" y="4" width="16" height="7" rx="3" fill="#e95420"/><rect x="4" y="13" width="16" height="7" rx="3" fill="#e95420"/><circle cx="16.500" cy="7.500" r="2.500" fill="#fff"/><circle cx="7.500" cy="16.500" r="2.500" fill="#fff"/></svg></button>
          <button type="button" class="deck" aria-label="Styles"><svg viewBox="0 0 24 24"><path d="M13 13l3.500-9H18l3.500 9M14.500 10h5.500" fill="none" stroke="#222" stroke-width="2.300"/><path d="M6 17l-4.500 5" stroke="#f98e7d" stroke-width="3"/><path d="M3 13q-1-4 3-5l9 6-4 5-6-5 3-4M3 13l4 4" fill="#fff" stroke="#555"/></svg></button>
          <button type="button" class="deck" aria-label="Gallery"><svg viewBox="0 0 24 24"><rect x="2.500" y="3.500" width="16" height="13" rx="1" fill="#d95bc8" stroke="#333"/><rect x="5.500" y="7.500" width="16" height="13" rx="1" fill="#d95bc8" stroke="#333"/><path d="M9 18l1-3 2-2 2 2 1-1 2 4z" fill="#fff"/><circle cx="17" cy="12" r="1" fill="#fff"/></svg></button>
          <button type="button" class="deck" aria-label="Navigator"><svg viewBox="0 0 24 24"><circle cx="12" cy="12" r="9.500" fill="#4a7ce8" stroke="#444"/><path d="M17 7l-3 7-6 3 3-7z" fill="#eee"/><path d="M17 7l-5 3 3 2z" fill="#d8204a"/></svg></button>
          <button type="button" class="deck" aria-label="Functions"><svg viewBox="0 0 24 24"><path d="M13 3.500q-5-1-5 3.500v13M5 10h7" fill="none" stroke="#222" stroke-width="2"/><path d="M15 14l6 6M21 14l-6 6" stroke="#444" stroke-width="1.800"/></svg></button>
        </aside>
      </div>

      <footer class="status">
        <span class="st-sheet">Sheet 1 of 3</span>
        <span class="st-blank"></span>
        <span class="st-style">Default</span>
        <span class="st-lang">English (Hong Kong)</span>
        <span class="st-mode"></span>
        <span class="st-ico"><svg width="18" height="14" viewBox="0 0 18 14"><path d="M.5 4.500h8v5h-8z" fill="none" stroke="#e95420"/><path d="M12 3.500h5M12 11.500h5M14.500 3v9" stroke="#333"/></svg></span>
        <span class="st-ico"><svg width="14" height="14" viewBox="0 0 14 14"><path d="M5.500 2.500h3v4h2.500L7 10.500 3 6.500h2.500z" fill="#9bcf3c" stroke="#3d5a20"/><path d="M3 12h8" stroke="#444"/><circle cx="12" cy="2.500" r="1.500" fill="#c9112d"/></svg></span>
        <span class="st-ico"></span>
        <span class="st-sum">Average: ; Sum: 0</span>
        <span class="st-zoom">
          <button type="button" aria-label="Zoom out"><svg width="8" height="8"><path d="M0 4h8" stroke="#555" stroke-width="2"/></svg></button>
          <input type="range" min="0" max="100" value="50" aria-label="Zoom">
          <button type="button" aria-label="Zoom in"><svg width="8" height="8"><path d="M0 4h8M4 0v8" stroke="#555" stroke-width="2"/></svg></button>
        </span>
        <span class="st-pct">100%</span>
      </footer>
    </main>
  </div>

  <!-- sheet tab context menu -->
  <div class="context-menu" role="menu">
    <button type="button">Insert Sheet...</button>
    <button type="button">Delete Sheet...</button>
    <button type="button">Rename Sheet...</button>
    <button type="button">Move or Copy Sheet...</button>
    <button type="button">Select All Sheets</button>
    <hr>
    <button type="button">Protect Sheet...</button>
    <button type="button">Hide Sheet</button>
    <hr>
    <button type="button"><svg width="12" height="10" viewBox="0 0 12 10"><path d="M1 4.500l3.500 3.500L11 1.500" fill="none" stroke="#333" stroke-width="1.800"/></svg>View Grid Lines</button>
    <hr>
    <button type="button">Tab Color...</button>
    <button type="button">Sheet Events...</button>
  </div>
  <svg class="cursor" width="20" height="28" viewBox="0 0 20 28"><path d="M2 2v20l4.500-4 3.500 8 4-2-3.500-7.500H17z" fill="#333" stroke="#fff" stroke-width="1.500"/></svg>

  <script src="script.js"></script>
</body>
</html>
```
FILE: styles.css
```
* {
  box-sizing: border-box;
}

body {
  margin: 0;
  height: 100vh;
  display: flex;
  flex-direction: column;
  overflow: hidden;
  font-family: "Noto Sans", "Noto Sans CJK SC", sans-serif;
  font-size: 14px;
  color: #3d3d3d;
  background: #fafafa;
}

button, input {
  font: inherit;
  color: inherit;
  margin: 0;
  padding: 0;
  border: none;
  background: none;
}

button {
  display: flex;
  align-items: center;
  justify-content: center;
  white-space: nowrap;
}

.defs {
  position: absolute;
}

/* top panel */
.topbar {
  height: 27px;
  flex: none;
  display: grid;
  grid-template-columns: 1fr auto 1fr;
  align-items: center;
  padding: 0 17px 0 19px;
  background: #131313;
  color: #eee;
}

.topbar-left {
  display: flex;
  gap: 40px;
}

.app-name {
  gap: 8px;
}

.clock {
  gap: 8px;
  margin-left: 104px;
}

.clock svg {
  margin-left: 10px;
}

.topbar-right {
  display: flex;
  justify-content: flex-end;
  gap: 12px;
}

.desktop {
  flex: 1;
  min-height: 0;
  display: flex;
}

/* dock */
.dock {
  width: 70px;
  flex: none;
  display: flex;
  flex-direction: column;
  align-items: center;
  padding: 6px 3px;
  background: linear-gradient(160deg, #190d14, #1d1017 60%, #2b1424);
}

.dock button {
  width: 64px;
  height: 64px;
  flex: none;
  margin-bottom: 4px;
  border-radius: 12px;
  position: relative;
}

.dock button svg {
  width: 48px;
  height: 48px;
}

.dock .active {
  background: #433a40;
}

.dock .active::before {
  content: "";
  position: absolute;
  left: 0;
  width: 6px;
  height: 6px;
  border-radius: 50%;
  background: #e95420;
}

.dock hr {
  width: 48px;
  height: 1px;
  flex: none;
  margin: -1px 0 3px;
  border: none;
  background: #ccc;
}

.dock .apps {
  margin: auto 0 0;
}

/* window */
.window {
  flex: 1;
  min-width: 0;
  display: flex;
  flex-direction: column;
}

.titlebar {
  height: 37px;
  flex: none;
  display: grid;
  grid-template-columns: 1fr auto 1fr;
  align-items: center;
  background: #ebebeb;
  border-bottom: 1px solid #bdbdbd;
}

.titlebar h1 {
  grid-column: 2;
  margin: 0;
  font-size: 15px;
  line-height: 20px;
  font-weight: bold;
}

.win-buttons {
  display: flex;
  justify-content: flex-end;
  gap: 12px;
  padding-right: 7px;
}

.win-buttons button {
  width: 22px;
  height: 22px;
  border-radius: 50%;
  background: #dadada;
}

.menubar {
  height: 25px;
  flex: none;
  display: flex;
}

.menubar nav {
  flex: 1;
  display: flex;
  gap: 18px;
  padding-left: 8px;
  border-bottom: 1px solid #dcdcdc;
}

.close-doc {
  width: 24px;
  padding-right: 8px;
}

.toolbar {
  height: 39px;
  flex: none;
  display: flex;
  align-items: center;
  padding: 0 0 2px 4px;
}

.tb {
  width: 33px;
  height: 33px;
  flex: none;
  border-radius: 6px;
}

.tb svg {
  width: 24px;
  height: 24px;
}

.tb.on {
  background: #d5d5d5;
  border: 1px solid #c4c4c4;
}

.dd {
  width: 11px;
  flex: none;
  color: #000;
}

.dd svg {
  width: 11px;
  height: 24px;
}

.dd.off {
  color: #bbb;
}

.sep {
  width: 1px;
  height: 33px;
  flex: none;
  margin: 0 3px 0 4px;
  background: #dcdcdc;
}

.sep.short {
  height: 25px;
}

.combo {
  height: 34px;
  flex: none;
  display: flex;
  border: 1px solid #c6c6c6;
  border-radius: 6px;
  background: #fff;
  overflow: hidden;
}

.combo input {
  flex: 1;
  min-width: 0;
  padding-left: 8px;
  color: #111;
}

.combo button {
  width: 35px;
  border-left: 1px solid #c6c6c6;
}

.font-name {
  width: 221px;
  margin-right: 8px;
  font-size: 15px;
  font-style: italic;
}

.font-size {
  width: 101px;
}

.name-box {
  width: 173px;
}

.work {
  flex: 1;
  min-height: 0;
  display: flex;
}

.doc {
  flex: 1;
  min-width: 0;
  display: flex;
  flex-direction: column;
}

.formula-bar {
  height: 39px;
  flex: none;
  display: flex;
  align-items: center;
  padding: 0 0 2px 4px;
}

.fb {
  width: 24px;
  height: 24px;
  flex: none;
}

.fb:first-of-type {
  margin-left: 2px;
}

.fb svg {
  width: 24px;
  height: 24px;
}

.formula {
  flex: 1;
  height: 24px;
  padding: 0 4px;
  border: 1px solid #c6c6c6;
  background: #fff;
}

.expand {
  width: 22px;
  padding-right: 4px;
}

/* infobars */
.infobar {
  height: 40px;
  flex: none;
  display: flex;
  align-items: center;
  padding: 0 0 1px 3px;
  border: 1px solid #c2c2c2;
  background: #bce5f7;
  color: #111;
}

.info {
  width: 30px;
  height: 30px;
  margin-right: 7px;
}

.infobar p {
  flex: 1;
  margin: 0;
}

.action {
  height: 34px;
  padding: 0 16px;
  border: 1px solid #c8c8c8;
  border-radius: 6px;
  background: #fff;
  color: #3d3d3d;
}

.dismiss {
  width: 28px;
  padding-left: 1px;
  color: #0b4f8a;
}

/* spreadsheet */
.sheet {
  flex: 1;
  min-height: 0;
  display: flex;
}

.grid-wrap {
  flex: 1;
  min-width: 0;
  overflow: hidden;
  background: #fff;
}

.grid {
  width: 100%;
  table-layout: fixed;
  border-collapse: separate;
  border-spacing: 0;
}

.grid th,
.grid td {
  height: 17px;
  padding: 1px 0 0;
  line-height: 15px;
  border: solid #c0c0c0;
  border-width: 0 1px 1px 0;
}

.grid th {
  background: #fafafa;
  border-color: #999;
  font-weight: normal;
}

.grid thead th {
  height: 20px;
  padding: 0 0 0 1px;
}

.grid tr > :last-child {
  border-right: none;
}

.grid .col {
  width: 82px;
}

.grid .corner {
  width: 41px;
}

.grid th.selected {
  background: #e95420;
  border-color: #c8481b;
  color: #fff;
  font-weight: bold;
}

.grid td.selected {
  position: relative;
  outline: 2px solid #e95420;
  outline-offset: -1px;
}

.grid td.selected::after {
  content: "";
  position: absolute;
  right: -3px;
  bottom: -3px;
  width: 5px;
  height: 5px;
  background: #e95420;
}

.vscroll {
  width: 12px;
  flex: none;
}

.vscroll i,
.hscroll i {
  display: block;
}

.vscroll .split {
  height: 5px;
  border: 2px solid #bbb;
  border-width: 2px 3px;
  background: #000;
}

.vscroll .thumb {
  width: 6px;
  height: 47.6%;
  margin: 5px 3px;
  border-radius: 3px;
  background: #888;
}

.hscroll {
  height: 12px;
  flex: none;
  display: flex;
  justify-content: space-between;
  padding: 0 12px 0 4px;
}

.hscroll .thumb {
  width: 47.3%;
  height: 6px;
  margin-top: 3px;
  border-radius: 3px;
  background: #888;
}

.hscroll .split {
  width: 5px;
  border: 2px solid #bbb;
  border-width: 3px 2px;
  background: #000;
}

/* sheet tabs */
.tabs {
  height: 25px;
  flex: none;
  display: flex;
  font-size: 12px;
}

.tab-nav {
  display: flex;
  gap: 7px;
  padding: 0 0 2px 9px;
}

.tab-nav svg {
  width: 18px;
  height: 14px;
}

.add-sheet {
  margin: 0 10px 2px 13px;
}

.add-sheet svg {
  width: 18px;
  height: 18px;
}

.tab {
  padding: 0 11px 2px;
}

.tab.current {
  background: #fff;
  border-bottom: 3px solid #999;
  padding: 1px 12px 0;
  font-weight: bold;
}

/* sidebar */
.sidebar {
  width: 59px;
  flex: none;
  position: relative;
  display: flex;
  flex-direction: column;
  align-items: center;
  gap: 8px;
  padding: 2px 0 0 1px;
  border-left: 1px solid #b8b8b8;
}

.deck {
  width: 36px;
  height: 34px;
  border-radius: 6px;
}

.deck svg {
  width: 24px;
  height: 24px;
}

.deck.settings {
  margin-bottom: 3px;
}

.deck.on {
  background: #d5d5d5;
  border: 1px solid #c4c4c4;
}

.collapse {
  position: absolute;
  left: -1px;
  top: 46%;
  width: 7px;
  height: 72px;
  background: #888;
}

/* status bar */
.status {
  height: 21px;
  flex: none;
  display: flex;
  align-items: center;
  border-top: 1px solid #b8b8b8;
  font-size: 12px;
}

.status > span {
  height: 14px;
  display: flex;
  align-items: center;
  justify-content: center;
  border-right: 1px solid #dcdcdc;
}

.status .st-sheet {
  width: 233px;
  padding-left: 10px;
  justify-content: flex-start;
}

.st-blank {
  width: 325px;
}

.status .st-style {
  width: 296px;
  padding-left: 8px;
  justify-content: flex-start;
}

.st-lang {
  width: 273px;
}

.st-mode {
  width: 68px;
}

.st-ico {
  width: 29px;
}

.st-sum {
  flex: 1;
}

.st-zoom {
  width: 142px;
  gap: 6px;
}

.status .st-pct {
  width: 48px;
  padding-right: 2px;
  border: none;
}

.st-zoom input {
  width: 97px;
  height: 8px;
  appearance: none;
  background: linear-gradient(#a0a0a0, #a0a0a0) center / 100% 2px no-repeat;
}

.st-zoom input::-webkit-slider-thumb {
  appearance: none;
  width: 8px;
  height: 8px;
  border: 1px solid #444;
  border-radius: 50%;
  background: #fff;
}

/* context menu */
.context-menu {
  position: absolute;
  left: 264px;
  bottom: 38px;
  width: 203px;
  padding: 4px 0;
  border: 1px solid #9a9a9a;
  border-radius: 6px;
  background: #fafafa;
  box-shadow: 0 1px 3px rgba(0, 0, 0, 0.3);
}

.context-menu button {
  width: 100%;
  height: 25px;
  padding-left: 29px;
  justify-content: flex-start;
  position: relative;
}

.context-menu svg {
  position: absolute;
  left: 8px;
}

.context-menu hr {
  height: 1px;
  margin: 0;
  border: none;
  background: #dcdcdc;
}

.cursor {
  position: absolute;
  left: 268px;
  bottom: 9px;
}
```
FILE: script.js
```
const grid = document.getElementById('grid');
const letters = 'ABCDEFGHIJKLMNOPQRSTU'.split('');
const rowCount = 42;

let html = '<thead><tr><th class="corner"></th>';
letters.forEach((l, i) => {
  html += `<th class="col${i === 0 ? ' selected' : ''}">${l}</th>`;
});
html += '<th></th></tr></thead><tbody>';

for (let r = 1; r <= rowCount; r++) {
  html += `<tr><th${r === 1 ? ' class="selected"' : ''}>${r}</th>`;
  for (let c = 0; c <= letters.length; c++) {
    html += r === 1 && c === 0 ? '<td class="selected"></td>' : '<td></td>';
  }
  html += '</tr>';
}
grid.innerHTML = html + '</tbody>';
```
